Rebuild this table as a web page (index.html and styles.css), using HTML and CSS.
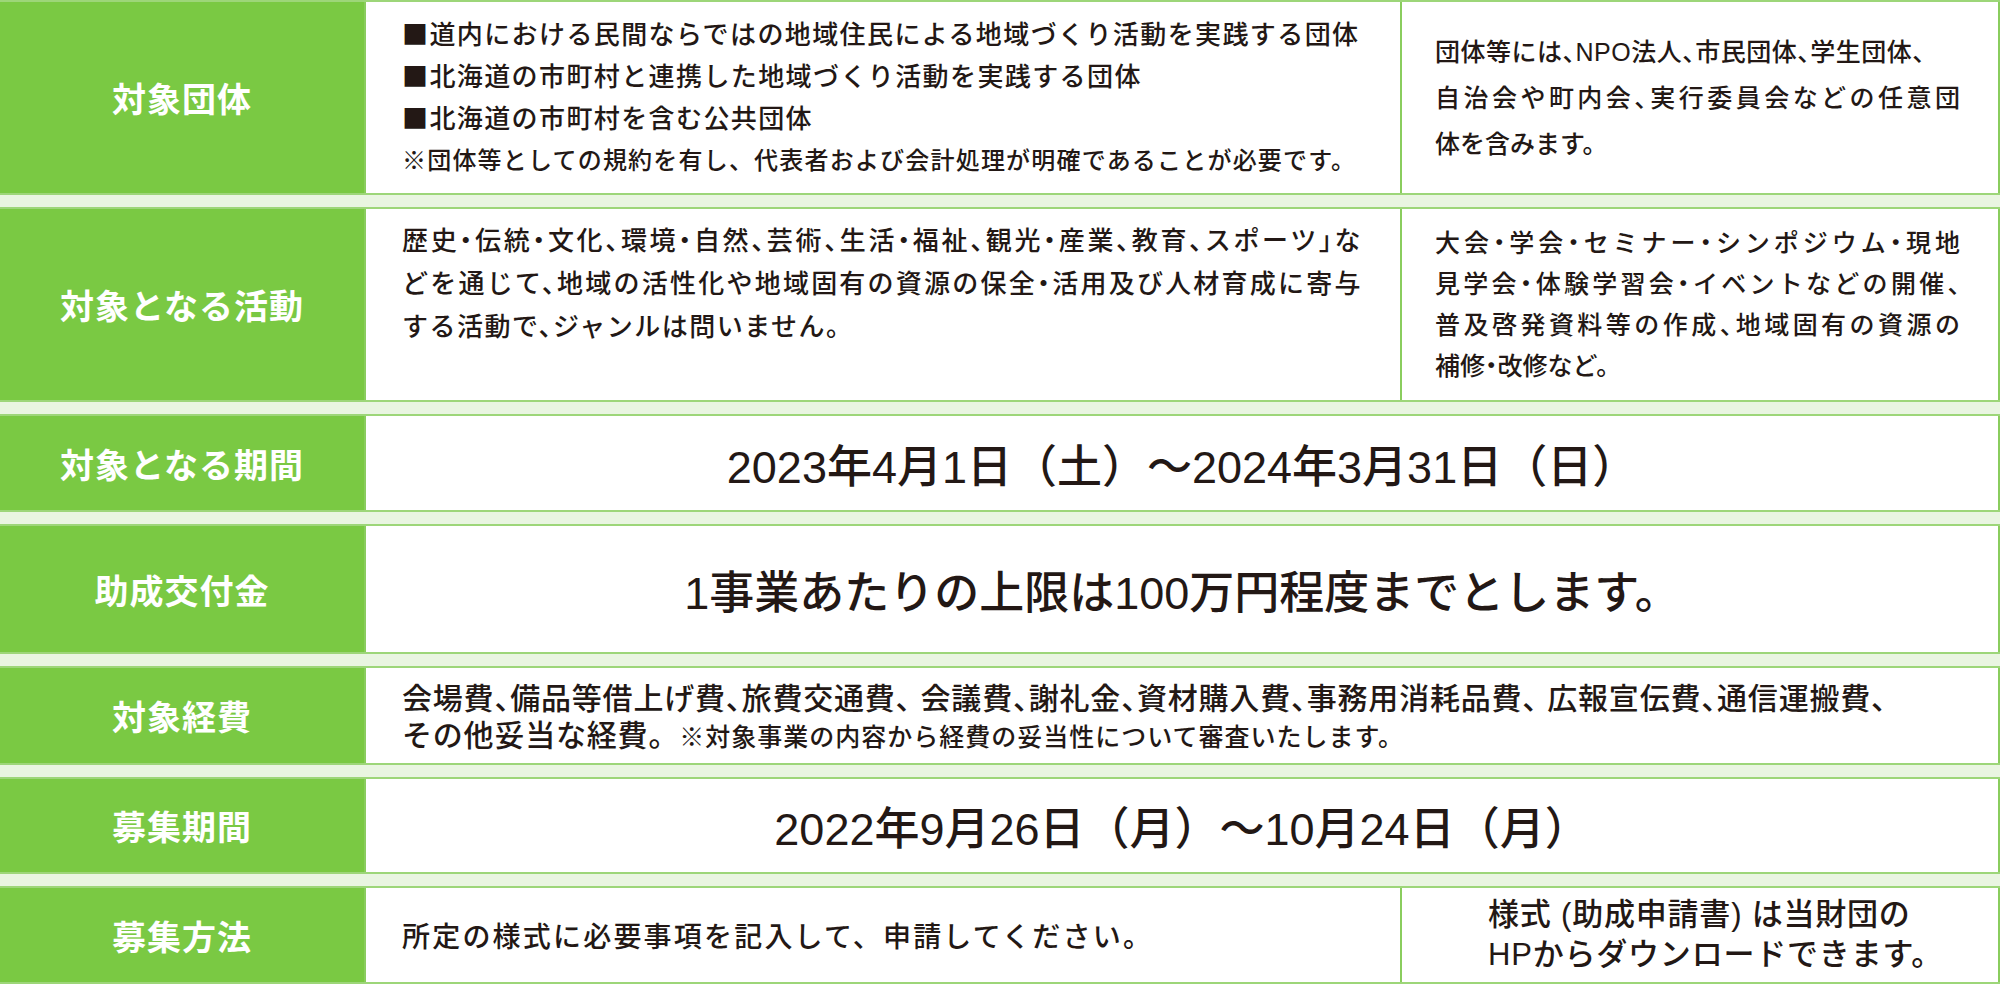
FILE: index.html
```html
<!DOCTYPE html>
<html lang="ja">
<head>
<meta charset="utf-8">
<title>助成概要</title>
<link rel="stylesheet" href="styles.css">
</head>
<body>
<div class="table">
  <div class="row split r1">
    <div class="label">対象団体</div>
    <div class="cell main bullets">
      <p>■道内における民間ならではの地域住民による地域づくり活動を実践する団体</p>
      <p>■北海道の市町村と連携した地域づくり活動を実践する団体</p>
      <p>■北海道の市町村を含む公共団体</p>
      <p class="small">※団体等としての規約を有し、代表者および会計処理が明確であることが必要です。</p>
    </div>
    <div class="cell side side-1">
      <p class="first">団体等には、NPO法人、市民団体、学生団体、</p>
      <p class="spread">自治会や町内会、実行委員会などの任意団</p>
      <p>体を含みます。</p>
    </div>
  </div>

  <div class="row split r2">
    <div class="label">対象となる活動</div>
    <div class="cell main activity">
      <p class="spread">歴史・伝統・文化、環境・自然、芸術、生活・福祉、観光・産業、教育、スポーツ」な</p>
      <p class="spread">どを通じて、地域の活性化や地域固有の資源の保全・活用及び人材育成に寄与</p>
      <p>する活動で、ジャンルは問いません。</p>
    </div>
    <div class="cell side side-2">
      <p class="spread">大会・学会・セミナー・シンポジウム・現地</p>
      <p class="spread">見学会・体験学習会・イベントなどの開催、</p>
      <p class="spread">普及啓発資料等の作成、地域固有の資源の</p>
      <p>補修・改修など。</p>
    </div>
  </div>

  <div class="row r3">
    <div class="label">対象となる期間</div>
    <div class="cell big">2023年4月1日（土）～2024年3月31日（日）</div>
  </div>

  <div class="row r4">
    <div class="label">助成交付金</div>
    <div class="cell big">1事業あたりの上限は100万円程度までとします。</div>
  </div>

  <div class="row r5">
    <div class="label">対象経費</div>
    <div class="cell main expenses">
      <p class="halt">会場費、備品等借上げ費、旅費交通費、 会議費、謝礼金、資材購入費、事務用消耗品費、 広報宣伝費、通信運搬費、</p>
      <p>その他妥当な経費。<span class="note">※対象事業の内容から経費の妥当性について審査いたします。</span></p>
    </div>
  </div>

  <div class="row r6">
    <div class="label">募集期間</div>
    <div class="cell big">2022年9月26日（月）～10月24日（月）</div>
  </div>

  <div class="row split r7">
    <div class="label">募集方法</div>
    <div class="cell main method">所定の様式に必要事項を記入して、申請してください。</div>
    <div class="cell side-center">
      <p>様式 (助成申請書) は当財団の</p>
      <p>HPからダウンロードできます。</p>
    </div>
  </div>
</div>
</body>
</html>
```

FILE: styles.css
```css
* {
  box-sizing: border-box;
  margin: 0;
  padding: 0;
}

body {
  width: 2000px;
  height: 984px;
  overflow: hidden;
  background: #e9f5e1;
  font-family: "Liberation Sans", "Noto Sans CJK JP", sans-serif;
  font-weight: 500;
  color: #231815;
}

.table {
  display: flex;
  flex-direction: column;
  gap: 12px;
}

.row {
  display: grid;
  grid-template-columns: 364px 1fr;
  border-top: 2px solid #9dd679;
  border-bottom: 2px solid #9dd679;
  background: #ffffff;
}

.row.split {
  grid-template-columns: 364px 1fr 600px;
}

.r1 { height: 195px; }
.r2 { height: 195px; }
.r3 { height: 98px; }
.r4 { height: 130px; }
.r5 { height: 99px; }
.r6 { height: 97px; }
.r7 { height: 98px; }

.label {
  background: #7ac943;
  color: #ffffff;
  font-family: "Noto Sans CJK JP", sans-serif;
  font-weight: 700;
  font-size: 34px;
  letter-spacing: 1px;
  display: flex;
  align-items: center;
  justify-content: center;
}

.cell {
  border-left: 2px solid #8acd5e;
  display: flex;
  flex-direction: column;
  justify-content: center;
}

.cell:last-child {
  border-right: 2px solid #8acd5e;
}

.main {
  padding: 0 38px 0 36px;
}

.spread {
  text-align: justify;
  text-align-last: justify;
}

.halt {
  font-feature-settings: "halt";
}

/* row 1 */
.bullets {
  font-family: "Noto Sans CJK JP", sans-serif;
  font-size: 26px;
  line-height: 42px;
  letter-spacing: 1.4px;
  padding-bottom: 4px;
}

.bullets .small {
  font-size: 24px;
  letter-spacing: 1.2px;
}

.side {
  padding: 0 38px 0 33px;
  font-size: 25px;
  font-feature-settings: "halt";
}

.side-1 {
  line-height: 46px;
}

.side-1 .first {
  letter-spacing: 0.5px;
}

.side-2 {
  line-height: 41px;
}

/* row 2 */
.activity {
  justify-content: flex-start;
  padding-top: 11px;
  font-size: 26px;
  line-height: 43px;
  letter-spacing: 1.5px;
  font-feature-settings: "halt";
}

/* big centered rows */
.big {
  align-items: center;
  font-size: 45px;
  letter-spacing: 0;
}

/* row 5 */
.expenses {
  font-size: 30px;
  line-height: 37px;
  letter-spacing: 0.8px;
  padding-top: 4px;
}

.expenses .note {
  font-size: 25px;
  letter-spacing: 1px;
}

/* row 7 */
.method {
  font-size: 28px;
  letter-spacing: 2.2px;
}

.side-center {
  align-items: flex-start;
  padding-left: 86px;
  font-size: 31px;
  line-height: 40px;
  letter-spacing: 0.8px;
}
```
